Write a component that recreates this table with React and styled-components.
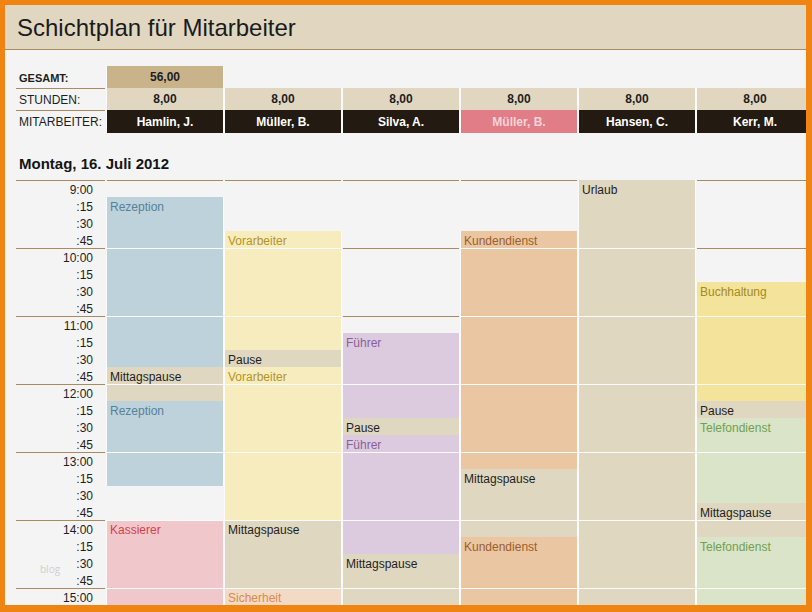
import React from "react";
import styled, { createGlobalStyle } from "styled-components";

const Global = createGlobalStyle`
  html, body { margin: 0; padding: 0; background: #ef8412; }
  body { font-family: "Liberation Sans", Arial, sans-serif; }
`;

const BROWN = "#a88b5e";

const Frame = styled.div`
  position: relative;
  width: 812px;
  height: 612px;
  box-sizing: border-box;
  border-style: solid;
  border-color: #ef8412;
  border-width: 5px 6px 7px 5px;
  background: #f4f4f4;
  overflow: hidden;
  display: flex;
  flex-direction: column;
`;

const Header = styled.header`
  flex: none;
  height: 45px;
  box-sizing: border-box;
  background: #e1d7c1;
  border-bottom: 1px solid ${BROWN};
  padding: 9px 0 0 12px;
`;

const Title = styled.h1`
  margin: 0;
  font-size: 24px;
  line-height: 28px;
  font-weight: normal;
  color: #1b1b1b;
  white-space: nowrap;
`;

const Body = styled.main`
  padding: 16px 0 0 11px;
`;

const Table = styled.div`
  display: grid;
  grid-template-columns: 89px repeat(6, 116px);
  column-gap: 2px;
  grid-template-rows: 22px 22px 23px;
`;

const Label = styled.div`
  display: flex;
  align-items: center;
  box-sizing: border-box;
  padding-left: 3px;
  font-size: ${(p) => (p.$bold ? "11px" : "12px")};
  font-weight: ${(p) => (p.$bold ? "bold" : "normal")};
  color: #1e1e1e;
  border-top: 1px solid ${(p) => (p.$line ? BROWN : "transparent")};
  white-space: nowrap;
`;

const Value = styled.div`
  display: flex;
  align-items: center;
  justify-content: center;
  font-size: 12px;
  font-weight: bold;
  color: ${(p) => p.$fg || "#1e1e1e"};
  background: ${(p) => p.$bg || "transparent"};
  box-shadow: ${(p) => (p.$bg ? "1px 0 0 #fbfbfb, -1px 0 0 #fbfbfb" : "none")};
  white-space: nowrap;
`;

const DateTitle = styled.h2`
  margin: 22px 0 7px 3px;
  font-size: 15px;
  line-height: 18px;
  font-weight: bold;
  color: #141414;
`;

const Schedule = styled.div`
  display: grid;
  grid-template-columns: 89px repeat(6, 116px);
  column-gap: 2px;
  align-items: start;
`;

const Column = styled.div`
  display: flex;
  flex-direction: column;
`;

const TimeCell = styled.div`
  height: 17px;
  box-sizing: border-box;
  border-top: 1px solid ${(p) => (p.$hour ? BROWN : "transparent")};
  padding: 1px 12px 0 0;
  text-align: right;
  font-size: 12px;
  line-height: 16px;
  color: #1e1e1e;
`;

const Slot = styled.div`
  height: 17px;
  box-sizing: border-box;
  border-top: 1px solid ${(p) => p.$line};
  background: ${(p) => p.$bg || "transparent"};
  box-shadow: ${(p) => (p.$bg ? "1px 0 0 #fbfbfb, -1px 0 0 #fbfbfb" : "none")};
  padding: 1px 0 0 3px;
  font-size: 12px;
  line-height: 16px;
  color: ${(p) => p.$fg || "#1e1e1e"};
  white-space: nowrap;
  overflow: visible;
`;

const Watermark = styled.span`
  position: absolute;
  left: 35px;
  top: 557px;
  font-size: 10px;
  color: #cfcfcf;
  font-family: "Open Sans", "Liberation Sans", sans-serif;
`;

const KINDS = {
  rez: { bg: "#bdd2db", fg: "#56819b" },
  vor: { bg: "#f6ecbd", fg: "#b39427" },
  pause: { bg: "#e0d7c0", fg: "#1e1e1e" },
  fue: { bg: "#dccbdf", fg: "#8b5e99" },
  kun: { bg: "#eac6a3", fg: "#9b5e2c" },
  buch: { bg: "#f4e39a", fg: "#a38b1f" },
  tel: { bg: "#d9e4c8", fg: "#72a050" },
  kas: { bg: "#f0c8cb", fg: "#d6404f" },
  sich: { bg: "#f3dac6", fg: "#db8a4a" },
};

const EMPLOYEES = [
  { name: "Hamlin, J.", hours: "8,00" },
  { name: "Müller, B.", hours: "8,00" },
  { name: "Silva, A.", hours: "8,00" },
  { name: "Müller, B.", hours: "8,00", highlight: true },
  { name: "Hansen, C.", hours: "8,00" },
  { name: "Kerr, M.", hours: "8,00" },
];

const COLUMNS = [
  [[null, null, 1], ["Rezeption", "rez", 10], ["Mittagspause", "pause", 2], ["Rezeption", "rez", 5], [null, null, 2], ["Kassierer", "kas", 5]],
  [[null, null, 3], ["Vorarbeiter", "vor", 7], ["Pause", "pause", 1], ["Vorarbeiter", "vor", 9], ["Mittagspause", "pause", 4], ["Sicherheit", "sich", 1]],
  [[null, null, 9], ["Führer", "fue", 5], ["Pause", "pause", 1], ["Führer", "fue", 7], ["Mittagspause", "pause", 3]],
  [[null, null, 3], ["Kundendienst", "kun", 14], ["Mittagspause", "pause", 4], ["Kundendienst", "kun", 4]],
  [["Urlaub", "pause", 25]],
  [[null, null, 6], ["Buchhaltung", "buch", 7], ["Pause", "pause", 1], ["Telefondienst", "tel", 5], ["Mittagspause", "pause", 2], ["Telefondienst", "tel", 4]],
];

const ROWS = 25;
const timeLabel = (i) => {
  const q = i % 4;
  if (q === 0) return `${9 + i / 4}:00`;
  return `:${q * 15}`;
};

function expand(segments) {
  const cells = [];
  segments.forEach(([label, kind, len]) => {
    for (let k = 0; k < len; k++) {
      cells.push({ label: k === 0 ? label : null, kind });
    }
  });
  return cells;
}

export default function App() {
  return (
    <>
      <Global />
      <Frame>
        <Header>
          <Title>Schichtplan für Mitarbeiter</Title>
        </Header>
        <Body>
          <Table>
            <Label $bold>GESAMT:</Label>
            <Value $bg="#c8b38a">56,00</Value>
            {EMPLOYEES.slice(1).map((_, i) => (
              <Value key={`g${i}`} />
            ))}
            <Label $line>STUNDEN:</Label>
            {EMPLOYEES.map((e, i) => (
              <Value key={`h${i}`} $bg="#e1d7c1">
                {e.hours}
              </Value>
            ))}
            <Label $line>MITARBEITER:</Label>
            {EMPLOYEES.map((e, i) => (
              <Value
                key={`n${i}`}
                $bg={e.highlight ? "#e07d87" : "#231a12"}
                $fg={e.highlight ? "#f8d3d7" : "#ffffff"}
              >
                {e.name}
              </Value>
            ))}
          </Table>
          <DateTitle>Montag, 16. Juli 2012</DateTitle>
          <Schedule>
            <Column>
              {Array.from({ length: ROWS }, (_, i) => (
                <TimeCell key={i} $hour={i % 4 === 0}>
                  {timeLabel(i)}
                </TimeCell>
              ))}
            </Column>
            {COLUMNS.map((segs, c) => (
              <Column key={c}>
                {expand(segs).map((cell, i) => {
                  const k = cell.kind ? KINDS[cell.kind] : null;
                  let line = "transparent";
                  if (i % 4 === 0) {
                    if (!k) line = BROWN;
                    else line = i === 0 ? k.bg : "#fbfbfb";
                  }
                  return (
                    <Slot key={i} $bg={k && k.bg} $fg={k && k.fg} $line={line}>
                      {cell.label}
                    </Slot>
                  );
                })}
              </Column>
            ))}
          </Schedule>
        </Body>
        <Watermark>blog</Watermark>
      </Frame>
    </>
  );
}
